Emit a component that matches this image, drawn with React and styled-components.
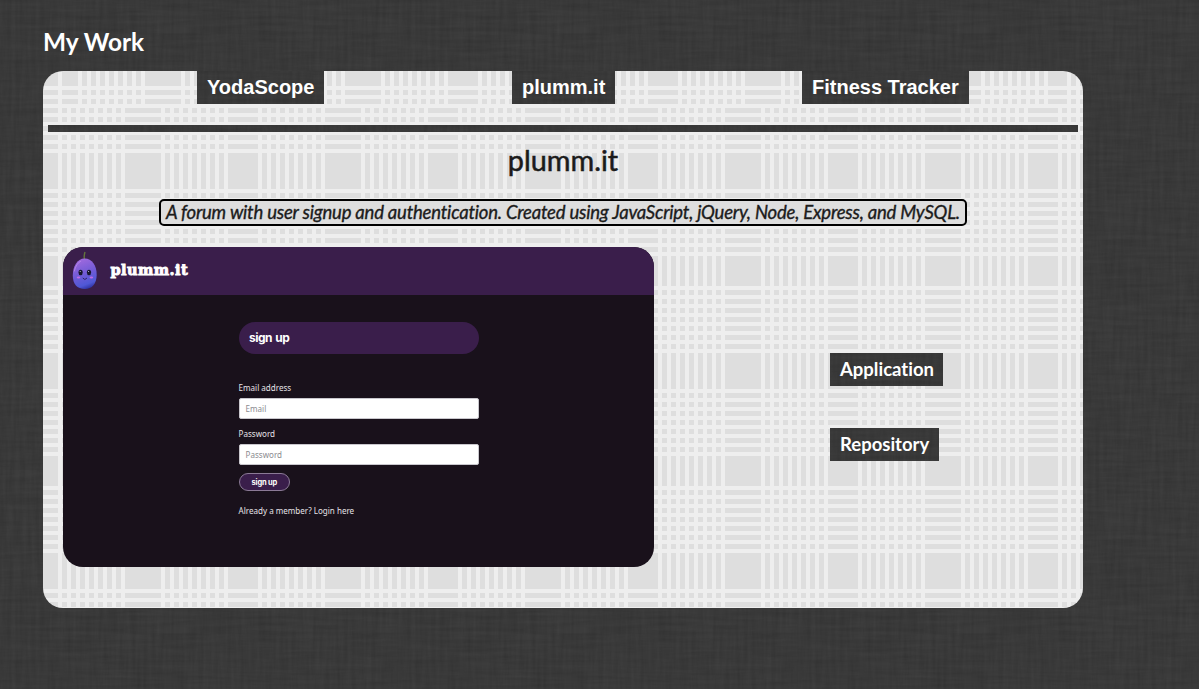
import React from 'react';
import styled, { createGlobalStyle } from 'styled-components';

const svgUrl = (body, w, h) =>
  `url("data:image/svg+xml,${encodeURIComponent(
    `<svg xmlns='http://www.w3.org/2000/svg' width='${w}' height='${h}'>${body}</svg>`
  )}")`;

const linen = svgUrl(
  `<filter id='v' x='0' y='0' width='100%' height='100%' color-interpolation-filters='sRGB'><feTurbulence type='fractalNoise' baseFrequency='0.25 0.02' numOctaves='3' seed='4' stitchTiles='stitch'/><feColorMatrix values='0.075 0 0 0 0.186  0.075 0 0 0 0.186  0.075 0 0 0 0.186  0 0 0 0 1'/></filter>
   <filter id='h' x='0' y='0' width='100%' height='100%' color-interpolation-filters='sRGB'><feTurbulence type='fractalNoise' baseFrequency='0.02 0.25' numOctaves='3' seed='9' stitchTiles='stitch'/><feColorMatrix values='0.075 0 0 0 0.186  0.075 0 0 0 0.186  0.075 0 0 0 0.186  0 0 0 0 1'/></filter>
   <rect width='400' height='300' filter='url(#v)'/><rect width='400' height='300' filter='url(#h)' opacity='.5'/>`,
  400,
  300
);

const stripeRuns = [
  [15, 78],
  [118, 181],
];
const stripeStarts = stripeRuns.flatMap(([first, last]) => {
  const starts = [];
  for (let p = first; p <= last; p += 9) starts.push(p);
  return starts;
});

const plaid = svgUrl(
  `<rect width='200' height='200' fill='#dedede'/><g fill='#eee'>${stripeStarts
    .map((p) => `<rect x='${p}' width='4' height='200'/><rect y='${p}' width='200' height='4'/>`)
    .join('')}</g>`,
  200,
  200
);

const GlobalStyle = createGlobalStyle`
  * { box-sizing: border-box; }
  body {
    margin: 0;
    min-height: 100vh;
    background: #393939 ${linen};
    font-family: Lato, sans-serif;
    font-variant-ligatures: none;
    color: #1b1b1b;
    overflow: hidden;
  }
`;

const Page = styled.main`
  width: 1083px;
  padding: 27px 0 0 43px;
`;

const PageTitle = styled.h1`
  margin: 0 0 14px;
  font-size: 24.4px;
  line-height: 30px;
  font-weight: 700;
  color: #fff;
`;

const Card = styled.section`
  width: 1040px;
  height: 537px;
  border-radius: 20px;
  background: ${plaid};
`;

const Nav = styled.nav`
  display: flex;
  width: 1000px;
  height: 33px;
  margin-left: 20px;
  padding-left: 134px;
  background: ${plaid};
`;

const Tag = styled.a`
  display: block;
  width: ${(p) => p.$width}px;
  height: 33px;
  margin-right: ${(p) => p.$gap || 0}px;
  padding-left: 10px;
  line-height: 33px;
  font-size: ${(p) => (p.$sans ? 20 : 18.5)}px;
  font-weight: 700;
  font-family: ${(p) => (p.$sans ? "'Liberation Sans', Arial, sans-serif" : 'Lato, sans-serif')};
  color: #fff;
  white-space: nowrap;
  background: #393939 ${linen};
`;

const Divider = styled.div`
  height: 7px;
  margin: 21px 5px 0;
  background: #393939 ${linen};
`;

const ProjectTitle = styled.h2`
  margin: 10px 0 0;
  text-align: center;
  font-size: 28.8px;
  line-height: 36px;
  font-weight: 400;
  -webkit-text-stroke: 0.5px #1b1b1b;
`;

const Summary = styled.p`
  width: 808px;
  height: 27px;
  margin: 21px auto 0;
  border: 2px solid #000;
  border-radius: 5px;
  background: #dedede;
  text-align: center;
  font-size: 18.5px;
  line-height: 23px;
  letter-spacing: -0.21px;
  font-style: italic;
  font-weight: 400;
  -webkit-text-stroke: 0.35px #1b1b1b;
  white-space: nowrap;
`;

const Content = styled.div`
  display: flex;
  padding: 21px 0 0 20px;
`;

const Preview = styled.article`
  width: 591px;
  height: 320px;
  border-radius: 20px;
  overflow: hidden;
  background: #19111b;
  font-family: 'Noto Sans', sans-serif;
  color: #e6e3e7;
`;

const PreviewHeader = styled.header`
  display: flex;
  height: 48px;
  padding: 4px 0 0 9px;
  background: #3a1e4b;
`;

const Brand = styled.span`
  margin-left: 12.5px;
  font-family: 'DejaVu Serif', serif;
  font-size: 14.5px;
  letter-spacing: 0.45px;
  line-height: 38px;
  font-weight: 900;
  color: #fff;
  -webkit-text-stroke: 0.9px #fff;
`;

const Form = styled.div`
  width: 240.4px;
  margin: 27px 0 0 175.6px;
`;

const FormTitle = styled.h3`
  height: 32px;
  margin: 0 0 28px;
  padding-left: 10.5px;
  border-radius: 16px;
  background: #3a1e4b;
  font-family: Inter, sans-serif;
  font-size: 12px;
  letter-spacing: -0.55px;
  word-spacing: 1px;
  line-height: 32px;
  font-weight: 700;
  color: #fff;
`;

const Label = styled.label`
  display: block;
  height: 16px;
  font-size: 8.05px;
  line-height: 11px;
`;

const Field = styled.div`
  height: 21px;
  margin-bottom: ${(p) => p.$after}px;
  padding-left: 6px;
  border: 1px solid #c9c7cd;
  border-radius: 2px;
  background: #fff;
  color: #8b8b90;
  font-size: 8.05px;
  line-height: 20px;
`;

const Submit = styled.button`
  display: block;
  width: 51.4px;
  height: 18px;
  padding: 0;
  border: 1px solid #8b7a96;
  border-radius: 9px;
  background: #3a1e4b;
  font: 700 7.5px/15px Inter, sans-serif;
  letter-spacing: -0.2px;
  color: #fff;
`;

const Login = styled.p`
  margin: 14px 0 0;
  font-size: 8.05px;
  line-height: 11px;
  white-space: nowrap;
`;

const Links = styled.div`
  display: flex;
  flex-direction: column;
  gap: 42px;
  padding: 106px 0 0 176px;
`;

function Plum() {
  return (
    <svg width="26" height="40" viewBox="0 0 26 40">
      <defs>
        <linearGradient id="skin" x1=".3" y1="0" x2=".6" y2="1">
          <stop offset="0" stopColor="#a16ade" />
          <stop offset=".5" stopColor="#715bd6" />
          <stop offset=".85" stopColor="#4f58d6" />
          <stop offset="1" stopColor="#3034a5" />
        </linearGradient>
      </defs>
      <path d="M12.5 9Q11.7 5 13 1" stroke="#64743c" strokeWidth="1.4" fill="none" />
      <path d="M12.7 7.5C20 7.5 24.7 14.5 24.7 23.5C24.7 33 20 38 12.8 38C5 38 .8 33 .8 24.5C.8 15.5 5 7.5 12.7 7.5Z" fill="url(#skin)" />
      <path d="M2.2 20.5Q4 12.5 9 10" stroke="#bb8beb" strokeWidth="1" fill="none" opacity=".8" />
      <ellipse cx="8.6" cy="21.5" rx="2.1" ry="2.7" fill="#17172e" />
      <ellipse cx="17" cy="21.5" rx="2.1" ry="2.7" fill="#17172e" />
      <circle cx="8.2" cy="20.6" r=".5" fill="#d9d8ff" />
      <circle cx="16.6" cy="20.6" r=".5" fill="#d9d8ff" />
      <path d="M10.8 27Q12.8 30 15 27" stroke="#322067" fill="none" />
      <ellipse cx="6.5" cy="26.5" rx="1.8" ry="1" fill="#c16be4" />
      <ellipse cx="19.4" cy="26.5" rx="1.8" ry="1" fill="#c16be4" />
    </svg>
  );
}

export default function App() {
  return (
    <>
      <GlobalStyle />
      <Page>
        <PageTitle>My Work</PageTitle>
        <Card>
          <Nav>
            <Tag $sans $width={127} $gap={188}>YodaScope</Tag>
            <Tag $sans $width={103} $gap={187}>plumm.it</Tag>
            <Tag $sans $width={167}>Fitness Tracker</Tag>
          </Nav>
          <Divider />
          <ProjectTitle>plumm.it</ProjectTitle>
          <Summary>
            A forum with user signup and authentication. Created using JavaScript, jQuery, Node, Express, and MySQL.
          </Summary>
          <Content>
            <Preview>
              <PreviewHeader>
                <Plum />
                <Brand>plumm.it</Brand>
              </PreviewHeader>
              <Form>
                <FormTitle>sign up</FormTitle>
                <Label>Email address</Label>
                <Field $after={9}>Email</Field>
                <Label>Password</Label>
                <Field $after={8}>Password</Field>
                <Submit>sign up</Submit>
                <Login>Already a member? Login here</Login>
              </Form>
            </Preview>
            <Links>
              <Tag $width={113}>Application</Tag>
              <Tag $width={109}>Repository</Tag>
            </Links>
          </Content>
        </Card>
      </Page>
    </>
  );
}
